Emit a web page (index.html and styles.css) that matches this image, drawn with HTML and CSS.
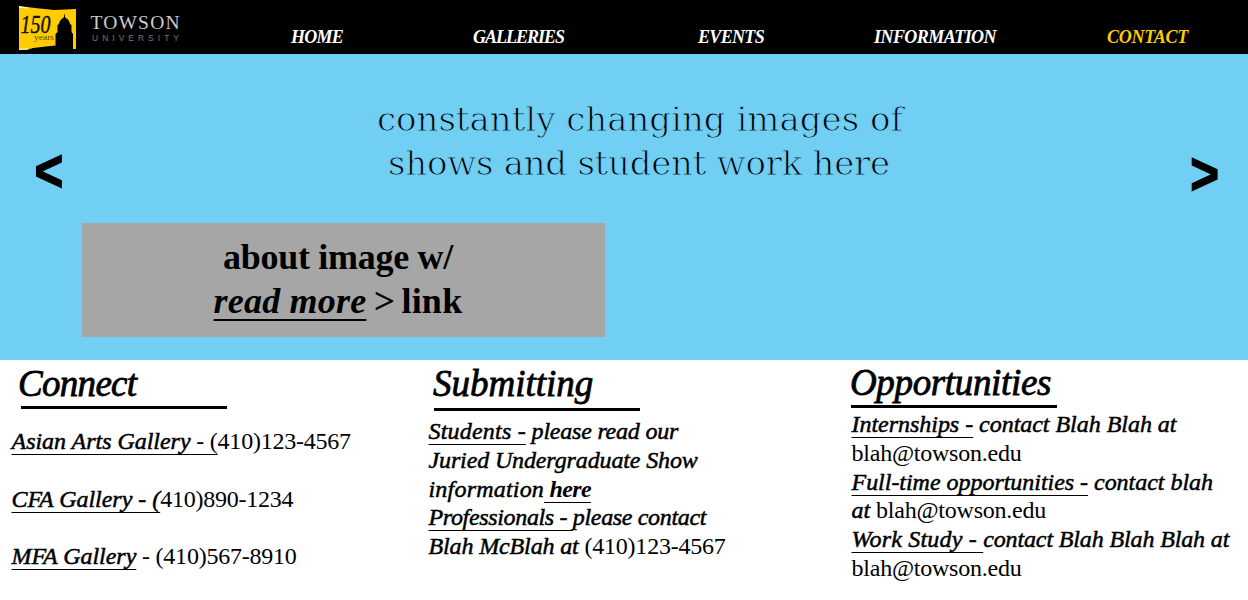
FILE: index.html
```
<!DOCTYPE html>
<html lang="en">
<head>
<meta charset="utf-8">
<title>Towson University Galleries</title>
<link rel="stylesheet" href="styles.css">
</head>
<body>
<header class="header">
  <svg class="logo" width="185" height="54" viewBox="0 0 185 54" role="img" aria-label="Towson University 150 years">
    <path d="M19 6L35 8L54 10L76 9V49H73L55 45.500L33 48L28 49.500L19 50Z" fill="#fc0"/>
    <path d="M19 6.300L28 7.500V8.500L19 8ZM19 49L28 48V49.500L19 50Z" fill="#fff6c4"/>
    <path d="M64.500 13L65.200 17.500Q69.500 19.500 70 24L71.500 25V32L73 34V50H55.500V34L57.500 32V25L59 24Q59.500 19.500 63.800 17.500Z" fill="#000"/>
    <text class="logo-years" x="20.500" y="32.500" textLength="30" lengthAdjust="spacingAndGlyphs">150</text>
    <text class="logo-small" x="34" y="40" textLength="20" lengthAdjust="spacingAndGlyphs">years</text>
    <text class="logo-name" x="90.500" y="28.500" textLength="89" lengthAdjust="spacing">TOWSON</text>
    <text class="logo-sub" x="92" y="41" textLength="87" lengthAdjust="spacing">UNIVERSITY</text>
  </svg>
  <nav class="nav">
    <a class="nav-home">HOME</a>
    <a class="nav-galleries">GALLERIES</a>
    <a class="nav-events">EVENTS</a>
    <a class="nav-information">INFORMATION</a>
    <a class="nav-contact">CONTACT</a>
  </nav>
</header>
<section class="hero">
  <span class="arrow arrow-prev">&lt;</span>
  <div class="slide">
    <h1 class="headline">constantly changing images of<br><span class="headline-two">shows and student work here</span></h1>
    <div class="about">
      <div class="about-one">about image w/</div>
      <div class="about-two"><a class="more">read more</a><span class="gt"> &gt; </span><span class="link">link</span></div>
    </div>
  </div>
  <span class="arrow arrow-next">&gt;</span>
</section>
<main class="columns">
  <section class="connect">
    <h2 class="title title-connect">Connect</h2>
    <div class="rule"></div>
    <div class="copy">
      <p><u>Asian Arts Gallery<span class="plain"> - (</span></u><span class="plain">410)123-4567</span></p>
      <p><u>CFA Gallery - (</u><span class="plain">410)890-1234</span></p>
      <p><u>MFA Gallery</u><span class="plain"> - (410)567-8910</span></p>
    </div>
  </section>
  <section class="submitting">
    <h2 class="title">Submitting</h2>
    <div class="rule"></div>
    <div class="copy">
      <p><u class="wide">Students -</u><span class="tight"> please read our</span></p>
      <p class="snug">Juried Undergraduate Show</p>
      <p><span class="wide">information</span><u class="strong"> here</u></p>
      <p class="tighter"><u>Professionals - </u>please contact</p>
      <p class="snug">Blah McBlah at <span class="plain">(410)123-4567</span></p>
    </div>
  </section>
  <section class="opportunities">
    <h2 class="title title-opportunities">Opportunities</h2>
    <div class="rule"></div>
    <div class="copy">
      <p><u>Internships -</u> contact Blah Blah at</p>
      <p><span class="plain">blah@towson.edu</span></p>
      <p><u>Full-time opportunities -</u> contact blah</p>
      <p>at <span class="plain">blah@towson.edu</span></p>
      <p><u class="wide">Work Study - </u><span class="snug">contact Blah Blah Blah at</span></p>
      <p><span class="plain">blah@towson.edu</span></p>
    </div>
  </section>
</main>
</body>
</html>
```
FILE: styles.css
```
* { box-sizing: border-box; }
body {
  margin: 0;
  height: 600px;
  overflow: hidden;
  background: #fff;
  color: #000;
  font-family: "Liberation Serif", "Times New Roman", serif;
}
h1, h2, p { margin: 0; font-weight: normal; }

.header { display: flex; height: 54px; background: #000; }
.logo { flex: none; margin-right: 106px; }
.logo-years { font: italic 25px "Liberation Serif", serif; fill: #111; stroke: #111; stroke-width: 0.4px; }
.logo-small { font: 8px "Liberation Serif", serif; fill: #55450a; }
.logo-name { font: 19.5px "Liberation Serif", serif; fill: #ccc; }
.logo-sub { font: 8.5px "Liberation Sans", sans-serif; fill: #777; }
.nav {
  display: grid;
  grid-template-columns: 182px 225px 176px 233px auto;
  padding-top: 27px;
  color: #fff;
  font-size: 18px;
  font-style: italic;
  font-weight: bold;
  line-height: 20px;
}
.nav-home { letter-spacing: -0.75px; }
.nav-galleries { letter-spacing: -1px; }
.nav-events { letter-spacing: -0.67px; }
.nav-information { letter-spacing: -0.55px; }
.nav-contact { letter-spacing: -0.29px; color: #fc0; }

.hero { display: flex; height: 306px; background: #72cff4; }
.arrow {
  flex: none;
  width: 82px;
  height: 60px;
  font: bold 56px/60px "Liberation Sans", sans-serif;
  text-align: center;
  transform: scale(0.88, 1.06);
  -webkit-text-stroke: 1.4px #000;
}
.arrow-prev { margin-top: 87px; padding-left: 16px; transform-origin: 49px 50%; }
.arrow-next { margin-top: 90px; padding-right: 5px; transform-origin: 39px 50%; }
.slide { width: 1084px; padding-top: 43px; }
.headline {
  width: 1116px;
  font: 34px/44px "DejaVu Serif", serif;
  text-align: center;
  -webkit-text-stroke: 1px #72cff4;
}
.headline-two { letter-spacing: -0.26px; margin-right: 2px; }
.about {
  width: 523px;
  height: 114px;
  margin-top: 38px;
  padding: 12px 11px 0 0;
  background: #a6a6a6;
  font-size: 36px;
  font-weight: bold;
  line-height: 44px;
  text-align: center;
}
.about-one { letter-spacing: -0.29px; }
.about-two { white-space: pre; }
.more {
  font-style: italic;
  letter-spacing: 0.2px;
  text-decoration: underline 2px;
  text-underline-offset: 6px;
  text-decoration-skip-ink: none;
}
.gt { font-weight: normal; letter-spacing: -1.1px; -webkit-text-stroke: 0.6px #000; }
.link { letter-spacing: 0.24px; }

.columns { display: grid; grid-template-columns: 417px 417px 1fr; padding: 2px 0 0 11px; }
.title {
  height: 44px;
  padding-left: 5px;
  font-size: 37px;
  font-style: italic;
  line-height: 43px;
  -webkit-text-stroke: 0.8px #000;
}
.title-connect { letter-spacing: -0.7px; padding-left: 7px; }
.title-opportunities { height: 43px; letter-spacing: -0.35px; line-height: 41px; }
.rule { width: 206px; height: 3px; background: #000; margin-left: 10px; }
.submitting .rule { margin: 2px 0 0 6px; }
.opportunities .rule { margin-left: 6px; }
.copy {
  font-size: 24px;
  font-style: italic;
  line-height: 28.8px;
  letter-spacing: -0.03px;
  -webkit-text-stroke: 0.5px #000;
}
.copy p { white-space: pre; }
.connect .copy { display: grid; gap: 28.8px; padding: 18px 0 0 0.5px; }
.submitting .copy { padding: 6px 0 0 0.5px; }
.opportunities .copy { padding: 2px 0 0 6.5px; }
.copy u {
  text-decoration: underline 1px;
  text-underline-offset: 5px;
  text-decoration-skip-ink: none;
}
.plain { font-style: normal; letter-spacing: -0.23px; -webkit-text-stroke: 0; }
.snug { letter-spacing: -0.13px; }
.tight { letter-spacing: -0.22px; }
.tighter { letter-spacing: -0.34px; }
.wide { letter-spacing: 0.2px; }
.strong { font-weight: bold; letter-spacing: -0.6px; -webkit-text-stroke: 0; }
```
